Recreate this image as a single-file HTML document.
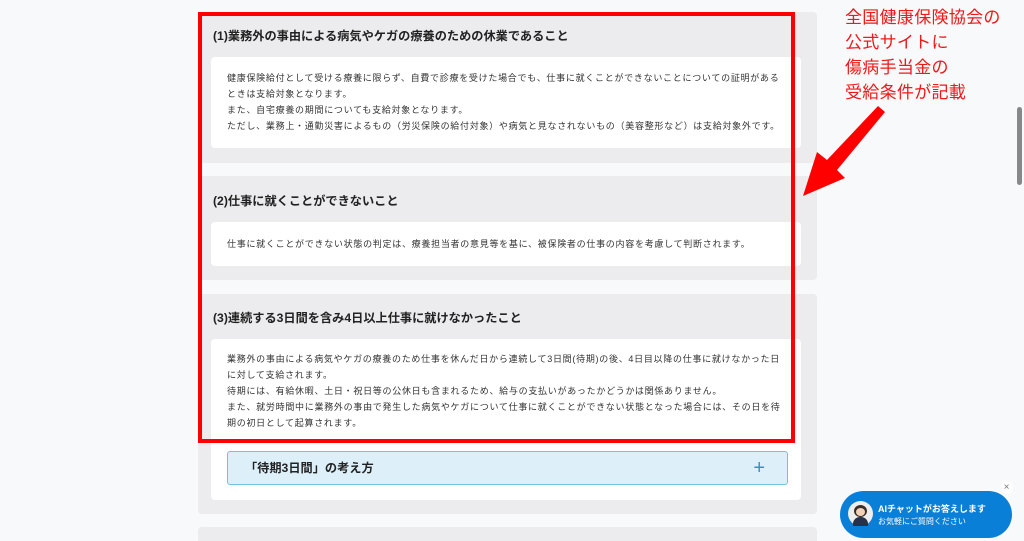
<!DOCTYPE html>
<html><head><meta charset="utf-8"><style>
*{margin:0;padding:0;box-sizing:border-box}
html,body{width:1024px;height:541px;overflow:hidden}
body{background:#f8f9fb;font-family:"Liberation Sans","Noto Sans CJK JP",sans-serif;position:relative;color:#333}
.panel{position:absolute;left:198px;width:619px;background:#ececee;border-radius:4px}
.card{position:absolute;left:13px;width:590px;background:#fff;border-radius:4px;font-size:9px;letter-spacing:0.72px;line-height:16px;padding:0 14px 0 16px;color:#333}
h3{position:absolute;left:15px;font-size:12.2px;font-weight:bold;color:#222}
.red{position:absolute;left:845px;color:#f01818;font-size:17px;letter-spacing:0.3px;line-height:25px;top:5px}
</style></head><body>
<div class="panel" style="top:12px;height:151px">
 <h3 style="top:14px">(1)業務外の事由による病気やケガの療養のための休業であること</h3>
 <div class="card" style="top:45px;height:91px;padding-top:13px">健康保険給付として受ける療養に限らず、自費で診療を受けた場合でも、仕事に就くことができないことについての証明があるときは支給対象となります。<br>また、自宅療養の期間についても支給対象となります。<br>ただし、業務上・通勤災害によるもの（労災保険の給付対象）や病気と見なされないもの（美容整形など）は支給対象外です。</div>
</div>
<div class="panel" style="top:176px;height:104px">
 <h3 style="top:15px">(2)仕事に就くことができないこと</h3>
 <div class="card" style="top:46px;height:44px;padding-top:14px">仕事に就くことができない状態の判定は、療養担当者の意見等を基に、被保険者の仕事の内容を考慮して判断されます。</div>
</div>
<div class="panel" style="top:294px;height:220px">
 <h3 style="top:14px">(3)連続する3日間を含み4日以上仕事に就けなかったこと</h3>
 <div class="card" style="top:45px;height:161px;padding-top:12px">業務外の事由による病気やケガの療養のため仕事を休んだ日から連続して3日間(待期)の後、4日目以降の仕事に就けなかった日に対して支給されます。<br>待期には、有給休暇、土日・祝日等の公休日も含まれるため、給与の支払いがあったかどうかは関係ありません。<br>また、就労時間中に業務外の事由で発生した病気やケガについて仕事に就くことができない状態となった場合には、その日を待期の初日として起算されます。</div>
</div>
<div style="position:absolute;left:227px;top:451px;width:561px;height:34px;background:#ddf0fa;border:1px solid #72c3da;border-radius:3px;font-size:12.2px;font-weight:bold;padding:0 0 0 17px;line-height:32px;color:#222">「待期3日間」の考え方<span style="position:absolute;right:22px;top:0;font-weight:normal;font-size:20px;color:#2a9ab8">+</span></div>
<div class="panel" style="top:527px;height:30px"></div>
<div style="position:absolute;left:198px;top:12px;width:597px;height:431px;border:4px solid #f00"></div>
<div class="red">全国健康保険協会の<br>公式サイトに<br>傷病手当金の<br>受給条件が記載</div>
<svg style="position:absolute;left:795px;top:100px" width="95" height="105"><polygon points="83,6 90,12 42,70 50,78 8,96 22,52 32,60" fill="#f00"/></svg>
<div style="position:absolute;left:1015px;top:0;width:9px;height:541px;background:#f8f9fb"></div>
<div style="position:absolute;left:1017px;top:107px;width:5px;height:78px;background:#888;border-radius:3px"></div>
<div style="position:absolute;left:840px;top:491px;width:172px;height:47px;background:#0a7fd8;border-radius:24px">
 <div style="position:absolute;left:8px;top:10px;width:25px;height:25px;border-radius:50%;background:#eee"><div style="position:absolute;left:6px;top:4px;width:13px;height:12px;border-radius:50%;background:#3a2e28"></div><div style="position:absolute;left:8px;top:7px;width:9px;height:8px;border-radius:50%;background:#f3d2b8"></div><div style="position:absolute;left:5px;top:16px;width:15px;height:9px;border-radius:7px 7px 0 0;background:#24324a"></div></div>
 <div style="position:absolute;left:38px;top:11px;color:#fff;font-size:9px;font-weight:bold">AIチャットがお答えします</div>
 <div style="position:absolute;left:38px;top:25px;color:#fff;font-size:8px">お気軽にご質問ください</div>
</div>
<div style="position:absolute;left:1000px;top:481px;width:13px;height:13px;border-radius:50%;background:#fff;color:#777;font-size:10px;line-height:13px;text-align:center">×</div>
</body></html>
